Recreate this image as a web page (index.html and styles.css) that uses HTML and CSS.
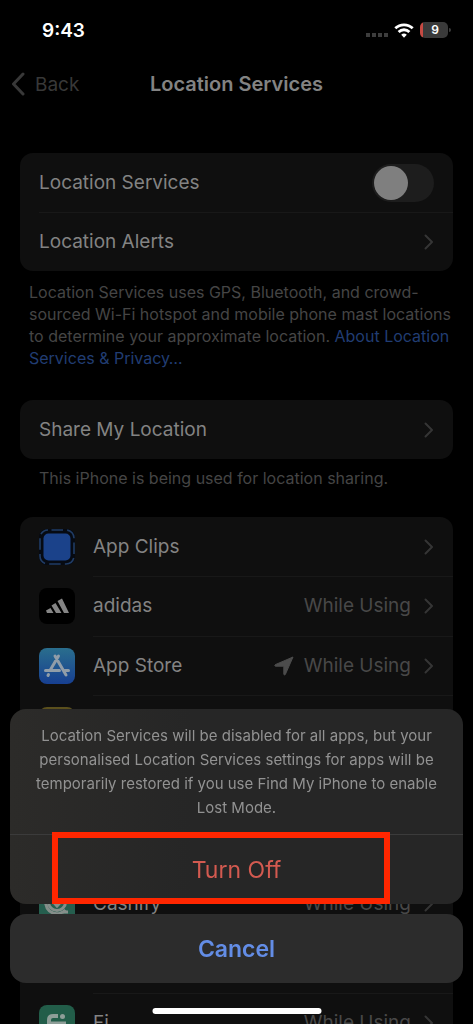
FILE: index.html
```html
<!DOCTYPE html>
<html lang="en">
<head>
<meta charset="utf-8">
<meta name="viewport" content="width=device-width, initial-scale=1">
<title>Location Services</title>
<link rel="stylesheet" href="styles.css">
</head>
<body>
<svg width="0" height="0" class="defs" aria-hidden="true">
  <symbol id="chevron" viewBox="0 0 10 16"><path d="M1.5 1.5 8 8l-6.500 6.500" fill="none" stroke="currentColor" stroke-width="2" stroke-linecap="round" stroke-linejoin="round"/></symbol>
</svg>
<div class="status">
  <span class="time">9:43</span>
  <div class="indicators">
    <svg class="signal" viewBox="0 0 22 4" aria-hidden="true"><path d="M0 0h4v4H0zM6 0h4v4H6zM12 0h4v4h-4zM18 0h4v4h-4z"/></svg>
    <svg class="wifi" viewBox="0 0 20 15" aria-hidden="true"><g fill="none" stroke="#fff" stroke-width="2.800"><path d="M1.300 5.300a12.500 12.500 0 0 1 17.400 0"/><path d="M4.600 8.900a7.800 7.800 0 0 1 10.800 0"/></g><path fill="#fff" d="M7.200 11.800a4.200 4.200 0 0 1 5.600 0L10 14.700z"/></svg>
    <span class="battery"><span class="level">9</span></span>
  </div>
</div>
<header class="nav">
  <a class="back" href="#"><svg viewBox="0 0 14 24" aria-hidden="true"><path d="M12 2 2.500 12 12 22" fill="none" stroke="currentColor" stroke-width="3" stroke-linecap="round" stroke-linejoin="round"/></svg>Back</a>
  <h1>Location Services</h1>
</header>
<main>
  <ul class="card">
    <li class="row"><label class="label" for="loc">Location Services</label><input class="switch" type="checkbox" role="switch" id="loc"></li>
    <li><a class="row" href="#"><span class="label">Location Alerts</span><svg class="chevron"><use href="#chevron"/></svg></a></li>
  </ul>
  <p class="note">Location Services uses GPS, Bluetooth, and crowd-<br>sourced Wi-Fi hotspot and mobile phone mast locations<br>to determine your approximate location. <a href="#">About Location<br>Services &amp; Privacy…</a></p>
  <ul class="card">
    <li><a class="row" href="#"><span class="label">Share My Location</span><svg class="chevron"><use href="#chevron"/></svg></a></li>
  </ul>
  <p class="note inset">This iPhone is being used for location sharing.</p>
  <ul class="card apps">
    <li><a class="row" href="#">
      <svg class="icon" viewBox="0 0 36 36" aria-hidden="true"><rect width="36" height="36" rx="8" fill="#060a12"/><rect x="1" y="1" width="34" height="34" rx="8" fill="none" stroke="#203c65" stroke-width="1.600" stroke-dasharray="11.500 4.200" stroke-dashoffset="-3.500"/><rect x="4.500" y="4.500" width="27" height="27" rx="5" fill="#1b428a"/></svg>
      <span class="label">App Clips</span><svg class="chevron"><use href="#chevron"/></svg></a></li>
    <li><a class="row" href="#">
      <svg class="icon" viewBox="0 0 36 36" aria-hidden="true"><rect width="36" height="36" rx="8" fill="#000"/><path fill="#858585" d="M7 22.500 11.500 20l3 5H8zM12.500 17.500l4-2.500 6 10h-5.500zM18.500 13l4.500-2.500L30 25h-5z"/></svg>
      <span class="label">adidas</span><span class="value">While Using</span><svg class="chevron"><use href="#chevron"/></svg></a></li>
    <li><a class="row" href="#">
      <svg class="icon" viewBox="0 0 36 36" aria-hidden="true"><defs><linearGradient id="store" x2="0" y2="1"><stop stop-color="#2a6e8d"/><stop offset="1" stop-color="#173f91"/></linearGradient></defs><rect width="36" height="36" rx="8" fill="url(#store)"/><g stroke="#919da8" stroke-width="3" stroke-linecap="round"><path d="M19.500 8 11 22.500M16 8l11 19M6.500 22.500h14M26 22.500h3.500M9.500 26.500 9 27.500"/></g></svg>
      <span class="label">App Store</span><svg class="arrow" viewBox="0 0 20 20" aria-hidden="true"><path d="M19 1 11.300 18.500a.8.800 0 0 1-1.500-.3V10.200H1.500a.8.800 0 0 1-.3-1.500z" fill="currentColor" stroke="currentColor" stroke-linejoin="round"/></svg><span class="value">While Using</span><svg class="chevron"><use href="#chevron"/></svg></a></li>
    <li class="row"><svg class="icon" viewBox="0 0 36 36" aria-hidden="true"><rect width="36" height="36" rx="8" fill="#5b501d"/></svg></li>
    <li class="row"></li>
    <li class="row"></li>
    <li><a class="row" href="#">
      <svg class="icon" viewBox="0 0 36 36" aria-hidden="true"><rect width="36" height="36" rx="8" fill="#255e4e"/><g fill="none" stroke="#858e8a" stroke-width="3"><path d="M6.500 12c-1 17 14 19 20 12"/><circle cx="18" cy="16" r="8.500"/><path d="m13.500 15 4.500 5 4.500-5M24 26h5"/></g></svg>
      <span class="label">Cashify</span><span class="value">While Using</span><svg class="chevron"><use href="#chevron"/></svg></a></li>
    <li class="row"></li>
    <li><a class="row" href="#">
      <svg class="icon" viewBox="0 0 36 36" aria-hidden="true"><rect width="36" height="36" rx="8" fill="#225d49"/><g fill="none" stroke="#8e9e98" stroke-width="4"><path d="M10 30V15q0-4 4-4h5M9 18.500h16v11.500"/></g><circle cx="23.500" cy="11.500" r="2.500" fill="#8e9e98"/></svg>
      <span class="label">Fi</span><span class="value">While Using</span><svg class="chevron"><use href="#chevron"/></svg></a></li>
  </ul>
</main>
<div class="sheet" role="dialog" aria-labelledby="message">
  <div class="panel">
    <p id="message">Location Services will be disabled for all apps, but your<br>personalised Location Services settings for apps will be<br>temporarily restored if you use Find My iPhone to enable<br>Lost Mode.</p>
    <div class="action"><button class="destructive" type="button">Turn Off</button><span class="highlight"></span></div>
  </div>
  <button class="cancel" type="button">Cancel</button>
</div>
<div class="home"></div>
</body>
</html>
```

FILE: styles.css
```css
* { box-sizing: border-box; }
body {
  margin: 0;
  height: 100vh;
  overflow: hidden;
  background: #000;
  color: #838383;
  font-family: Inter, "Liberation Sans", sans-serif;
  font-size: 19px;
}
a { color: inherit; text-decoration: none; }
button { font: inherit; border: 0; cursor: pointer; }
.defs { position: absolute; }

.status {
  display: flex;
  align-items: center;
  justify-content: space-between;
  height: 60px;
  padding: 0 22px 0 42px;
  color: #fff;
}
.time { font-weight: 600; }
.indicators { display: flex; align-items: center; gap: 6px; }
.signal { width: 22px; height: 4px; margin-top: 9px; fill: #3d3d3d; }
.wifi { width: 20px; height: 15px; }
.battery {
  display: flex;
  align-items: center;
}
.battery::after {
  content: "";
  width: 2px;
  height: 4px;
  margin-left: 1px;
  border-radius: 0 2px 2px 0;
  background: #3d3d3d;
}
.level {
  width: 28px;
  height: 16px;
  border-radius: 5px;
  background: linear-gradient(90deg, #c64a43 3px, #3a3a3a 3px);
  padding-left: 2px;
  font-size: 12px;
  font-weight: 600;
  line-height: 16px;
  text-align: center;
}

.nav {
  display: grid;
  grid-template-columns: 1fr auto 1fr;
  align-items: center;
  height: 48px;
  padding: 0 11px;
}
.nav h1 { margin: 0; font-size: 20px; font-weight: 600; }
.back { display: flex; align-items: center; gap: 10px; color: #383838; }
.back svg { width: 14px; height: 24px; }

main { padding: 45px 20px 0; }
.card {
  margin: 0;
  padding: 0;
  list-style: none;
  border-radius: 13px;
  background: #0f0f0f;
}
.row { display: flex; align-items: center; height: 59px; padding: 0 19px; }
.card > li + li { background: linear-gradient(#181818, #181818) 19px 0 / 100% 1px no-repeat; }
.apps > li + li { background-position: 73px 0; }
.apps > li:nth-child(even) { height: 60px; }
.label { flex: 1; }
.icon { width: 36px; height: 36px; margin-right: 18px; }
.value { color: #484848; margin-right: 13px; }
.arrow { width: 20px; height: 20px; margin-right: 10px; color: #4c4c4c; }
.chevron { width: 10px; height: 16px; color: #353535; }
.switch {
  appearance: none;
  width: 62px;
  height: 38px;
  margin: 0;
  padding: 2px;
  border-radius: 19px;
  background: #1d1d1d;
}
.switch::before {
  content: "";
  display: block;
  width: 34px;
  height: 34px;
  border-radius: 50%;
  background: #7f7f7f;
}
.switch:checked::before { margin-left: auto; }

.note {
  margin: 10px 0 31px;
  padding: 0 9px;
  color: #454545;
  font-size: 16px;
  line-height: 22px;
  white-space: nowrap;
}
.note a { color: #213d73; }
.inset { margin: 8px 0 28px; padding: 0 19px; }

.sheet {
  position: fixed;
  inset: auto 10px 41px;
  display: grid;
  gap: 10px;
  text-align: center;
}
.panel {
  border-radius: 16px;
  background: linear-gradient(90deg, #2c2b29, #262626 40%);
}
.panel p {
  margin: 0;
  padding: 15px 0 14px;
  color: #929292;
  font-size: 15px;
  line-height: 24px;
  white-space: nowrap;
}
.action { position: relative; border-top: 1px solid #3b3b3b; }
.destructive {
  width: 100%;
  height: 69px;
  background: none;
  color: #d35a50;
  font-size: 23px;
}
.highlight {
  position: absolute;
  inset: -3px 73px 0 42px;
  border: 6px solid #ff2600;
  pointer-events: none;
}
.cancel {
  height: 69px;
  border-radius: 16px;
  background: #2c2c2c;
  color: #638de6;
  font-size: 23px;
  font-weight: 600;
}
.home {
  position: fixed;
  bottom: 10px;
  left: 50%;
  width: 169px;
  height: 6px;
  border-radius: 3px;
  background: #fff;
  transform: translateX(-50%);
}
```
